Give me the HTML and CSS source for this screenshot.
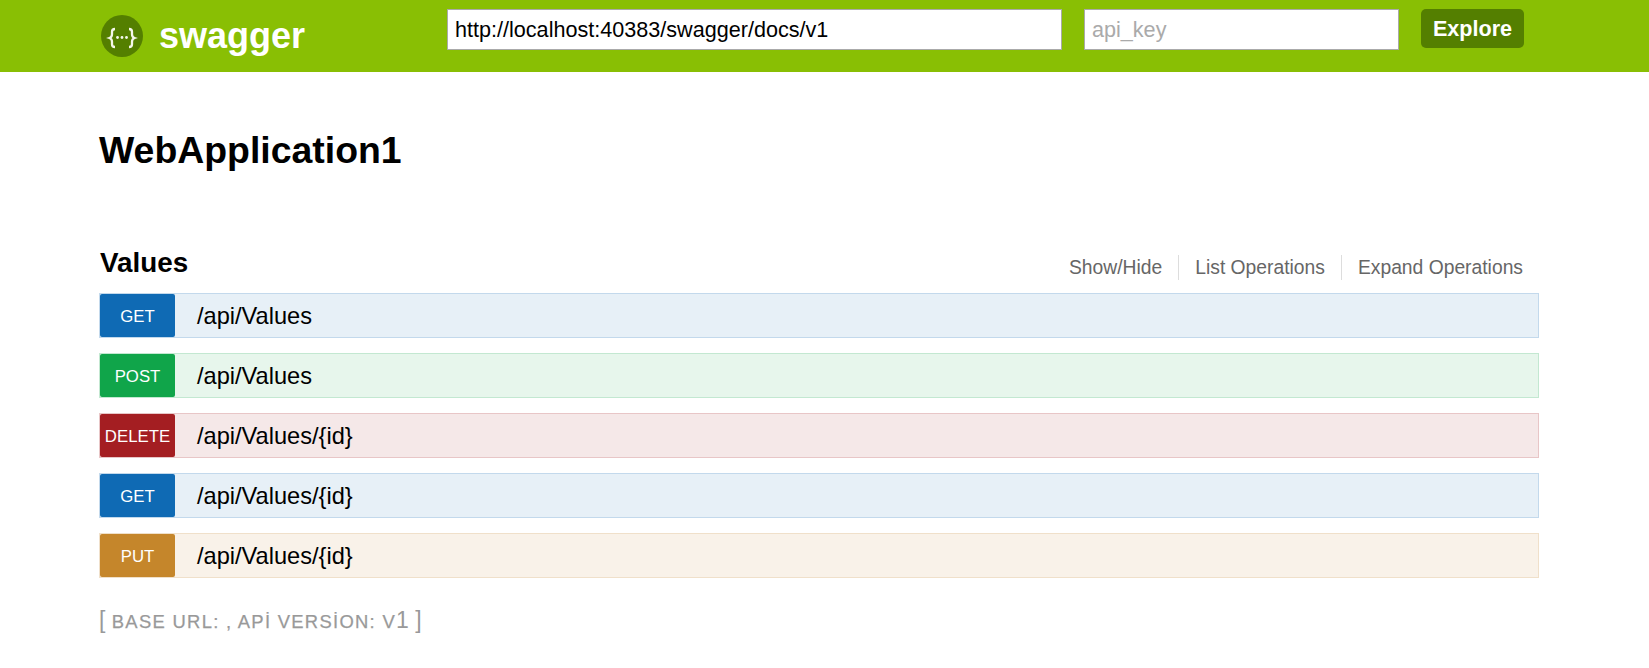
FILE: index.html
```html
<!DOCTYPE html>
<html lang="en">
<head>
<meta charset="utf-8">
<title>Swagger UI</title>
<link rel="stylesheet" href="styles.css">
</head>
<body>
<header class="topbar">
  <a class="brand">
    <svg class="logo" viewBox="0 0 42 42" width="42" height="42" aria-hidden="true">
      <circle cx="21" cy="21" r="21" fill="#547f00"/>
      <path d="M14 14c-2.2 0-3 .9-3 2.8v2.4c0 1.8-.8 3.2-2.5 3.8 1.7.6 2.5 2 2.5 3.8v2.4c0 1.9.8 2.8 3 2.8M28 14c2.2 0 3 .9 3 2.8v2.4c0 1.8.8 3.2 2.5 3.8-1.7.6-2.5 2-2.5 3.8v2.4c0 1.9-.8 2.8-3 2.8" fill="none" stroke="#f4f7ea" stroke-width="2.3"/>
      <circle cx="16.5" cy="22.5" r="1.4" fill="#f4f7ea"/>
      <circle cx="21" cy="22.5" r="1.4" fill="#f4f7ea"/>
      <circle cx="25.5" cy="22.5" r="1.4" fill="#f4f7ea"/>
    </svg>
    <span class="brand-name">swagger</span>
  </a>
  <form class="explore-form">
    <input class="field field-url" type="text" value="http://localhost:40383/swagger/docs/v1">
    <input class="field field-key" type="text" placeholder="api_key">
    <button class="explore" type="button">Explore</button>
  </form>
</header>
<main class="content">
  <h1 class="title">WebApplication1</h1>
  <section class="resource">
    <div class="resource-head">
      <h2 class="resource-name">Values</h2>
      <ul class="actions">
        <li>Show/Hide</li>
        <li>List Operations</li>
        <li>Expand Operations</li>
      </ul>
    </div>
    <ul class="ops">
      <li class="op op-get"><span class="verb">GET</span><span class="path">/api/Values</span></li>
      <li class="op op-post"><span class="verb">POST</span><span class="path">/api/Values</span></li>
      <li class="op op-delete"><span class="verb">DELETE</span><span class="path">/api/Values/{id}</span></li>
      <li class="op op-get"><span class="verb">GET</span><span class="path">/api/Values/{id}</span></li>
      <li class="op op-put"><span class="verb">PUT</span><span class="path">/api/Values/{id}</span></li>
    </ul>
  </section>
  <p class="footer" lang="tr"><span class="footer-big">[</span> base url: , api version: v<span class="footer-big">1</span> <span class="footer-big">]</span></p>
</main>
</body>
</html>
```
FILE: styles.css
```css
* { box-sizing: border-box; }
html, body { margin: 0; padding: 0; }
body {
  background: #fff;
  color: #000;
  font-family: "Liberation Sans", Arial, sans-serif;
}
.topbar {
  display: flex;
  align-items: flex-start;
  height: 72px;
  padding: 9px 0 0 101px;
  background: #89bf04;
}
.brand {
  display: flex;
  align-items: center;
  width: 346px;
  height: 53px;
  gap: 16px;
}
.logo { flex: none; }
.brand-name {
  color: #fff;
  font-size: 36px;
  font-weight: 700;
}
.explore-form {
  display: flex;
  align-items: flex-start;
}
.field {
  height: 41px;
  padding: 0 7px;
  border: 1px solid #aaa;
  border-radius: 0;
  outline: none;
  background: #fff;
  color: #000;
  font-family: inherit;
  font-size: 21.6px;
}
.field::placeholder { color: #aaa; opacity: 1; }
.field-url { width: 615px; margin-right: 22px; }
.field-key { width: 315px; margin-right: 22px; }
.explore {
  width: 103px;
  height: 39px;
  padding: 0;
  border: 0;
  border-radius: 5px;
  background: #547f00;
  color: #fff;
  font-family: inherit;
  font-size: 21.6px;
  font-weight: 700;
}
.content { padding: 0 110px 0 99px; }
.title {
  margin: 0;
  padding-top: 56px;
  font-size: 37.4px;
  line-height: 44px;
  font-weight: 700;
}
.resource { margin-top: 75px; }
.resource-head {
  display: flex;
  justify-content: space-between;
  align-items: flex-start;
  height: 46px;
}
.resource-name {
  margin: 0;
  padding-left: 1px;
  font-size: 27.8px;
  line-height: 32px;
  font-weight: 700;
}
.actions {
  display: flex;
  margin: 8px 0 0;
  padding: 0;
  list-style: none;
}
.actions li {
  height: 25px;
  padding: 0 16px;
  border-left: 1px solid #ddd;
  color: #666;
  font-size: 19.3px;
  line-height: 25px;
}
.actions li:first-child { border-left: 0; }
.ops {
  display: flex;
  flex-direction: column;
  gap: 15px;
  margin: 0;
  padding: 0;
  list-style: none;
}
.op {
  display: flex;
  align-items: stretch;
  height: 45px;
  border: 1px solid;
}
.verb {
  flex: none;
  width: 75px;
  margin: 0 22px 0 0;
  border-radius: 2px;
  color: #fff;
  font-size: 16.8px;
  line-height: 46px;
  text-align: center;
}
.path {
  font-size: 23.6px;
  line-height: 44px;
}
.op-get { background: #e7f0f7; border-color: #c3d9ec; }
.op-get .verb { background: #0f6ab4; }
.op-post { background: #e7f6ec; border-color: #c3e8d1; }
.op-post .verb { background: #10a54a; }
.op-delete { background: #f5e8e8; border-color: #e8c6c7; }
.op-delete .verb { background: #a41e22; }
.op-put { background: #f9f2e9; border-color: #f0e0ca; }
.op-put .verb { background: #c5862b; }
.footer {
  margin: 27px 0 0;
  color: #999;
  font-size: 18.4px;
  line-height: 30px;
  text-transform: uppercase;
  letter-spacing: 1.3px;
  -webkit-text-stroke: .25px #999;
}
.footer-big {
  font-size: 23px;
  letter-spacing: 0;
  -webkit-text-stroke: 0;
}
```
